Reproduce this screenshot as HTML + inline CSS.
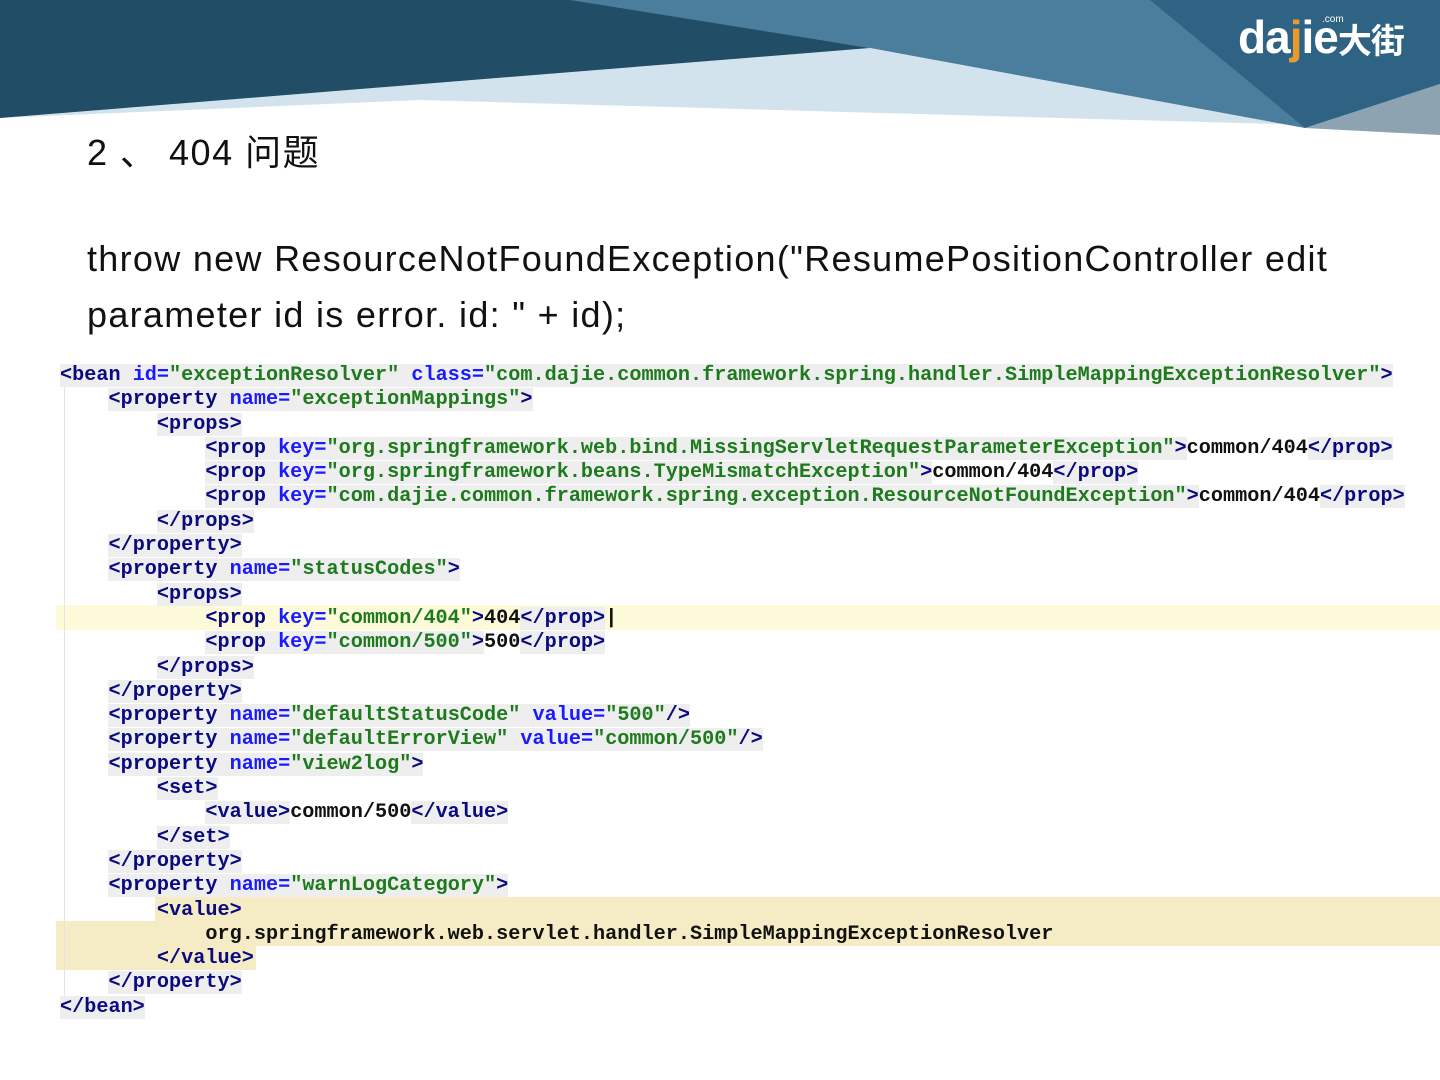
<!DOCTYPE html>
<html><head><meta charset="utf-8"><style>
body{margin:0;width:1440px;height:1080px;background:#fff;overflow:hidden;position:relative;font-family:"Liberation Sans","Noto Sans CJK SC",sans-serif}
.t{position:absolute;left:87px;font-size:36px;color:#111;white-space:nowrap;letter-spacing:1.3px}
.c{position:absolute;left:60px;font-family:"Liberation Mono",monospace;font-weight:bold;font-size:20.2px;line-height:24.3px;white-space:pre;color:#111}
.g{color:#0a0a80;background:#eeeeee}
.a{color:#1a1aff}
.v{color:#1d7a1d}
.hl{position:absolute}
</style></head><body>
<svg style="position:absolute;left:0;top:0" width="1440" height="140">
<polygon points="0,118 870,48 1310,125 420,100" fill="#d3e3ed"/>
<polygon points="560,0 1440,0 1440,84 1305,128 870,48" fill="#4a7e9c"/>
<polygon points="1150,0 1440,0 1440,84 1305,128" fill="#2f6383"/>
<polygon points="1305,128 1440,84 1440,135" fill="#8da3b1"/>
<polygon points="0,0 570,0 870,48 0,118" fill="#214d66"/>
</svg>
<div style="position:absolute;left:1238px;top:10px;color:#fff;font-weight:bold;font-size:46px;letter-spacing:-1px">da<span style="color:#e89a2a">j</span>ie<span style="font-size:34px">大街</span></div>
<div style="position:absolute;left:1322px;top:14px;color:#fff;font-size:10px">.com</div>
<div class="t" style="top:124px;letter-spacing:1.5px">2 、 404 问题</div>
<div class="t" style="top:238px">throw new ResourceNotFoundException("ResumePositionController edit</div>
<div class="t" style="top:294px">parameter id is error. id: " + id);</div>
<div class="hl" style="left:56px;top:605px;width:1384px;height:25px;background:#fcfad9"></div>
<div class="hl" style="left:155px;top:897px;width:1285px;height:49px;background:#f5ebc4"></div>
<div class="hl" style="left:56px;top:921px;width:200px;height:49px;background:#f5ebc4"></div>
<div class="hl" style="left:64px;top:386px;width:1px;height:610px;background:#e4e4e4"></div>
<div class="c" style="top:364px"><span class="g">&lt;bean <span class="a">id=</span><span class="v">"exceptionResolver"</span> <span class="a">class=</span><span class="v">"com.dajie.common.framework.spring.handler.SimpleMappingExceptionResolver"</span>&gt;</span>
    <span class="g">&lt;property <span class="a">name=</span><span class="v">"exceptionMappings"</span>&gt;</span>
        <span class="g">&lt;props&gt;</span>
            <span class="g">&lt;prop <span class="a">key=</span><span class="v">"org.springframework.web.bind.MissingServletRequestParameterException"</span>&gt;</span>common/404<span class="g">&lt;/prop&gt;</span>
            <span class="g">&lt;prop <span class="a">key=</span><span class="v">"org.springframework.beans.TypeMismatchException"</span>&gt;</span>common/404<span class="g">&lt;/prop&gt;</span>
            <span class="g">&lt;prop <span class="a">key=</span><span class="v">"com.dajie.common.framework.spring.exception.ResourceNotFoundException"</span>&gt;</span>common/404<span class="g">&lt;/prop&gt;</span>
        <span class="g">&lt;/props&gt;</span>
    <span class="g">&lt;/property&gt;</span>
    <span class="g">&lt;property <span class="a">name=</span><span class="v">"statusCodes"</span>&gt;</span>
        <span class="g">&lt;props&gt;</span>
            <span class="g" style="background:#fcfad9">&lt;prop <span class="a">key=</span><span class="v">"common/404"</span>&gt;</span>404<span class="g">&lt;/prop&gt;</span>|
            <span class="g">&lt;prop <span class="a">key=</span><span class="v">"common/500"</span>&gt;</span>500<span class="g">&lt;/prop&gt;</span>
        <span class="g">&lt;/props&gt;</span>
    <span class="g">&lt;/property&gt;</span>
    <span class="g">&lt;property <span class="a">name=</span><span class="v">"defaultStatusCode"</span> <span class="a">value=</span><span class="v">"500"</span>/&gt;</span>
    <span class="g">&lt;property <span class="a">name=</span><span class="v">"defaultErrorView"</span> <span class="a">value=</span><span class="v">"common/500"</span>/&gt;</span>
    <span class="g">&lt;property <span class="a">name=</span><span class="v">"view2log"</span>&gt;</span>
        <span class="g">&lt;set&gt;</span>
            <span class="g">&lt;value&gt;</span>common/500<span class="g">&lt;/value&gt;</span>
        <span class="g">&lt;/set&gt;</span>
    <span class="g">&lt;/property&gt;</span>
    <span class="g">&lt;property <span class="a">name=</span><span class="v">"warnLogCategory"</span>&gt;</span>
        <span class="g" style="background:none">&lt;value&gt;</span>
            org.springframework.web.servlet.handler.SimpleMappingExceptionResolver
        <span class="g" style="background:none">&lt;/value&gt;</span>
    <span class="g">&lt;/property&gt;</span>
<span class="g">&lt;/bean&gt;</span></div>
</body></html>
